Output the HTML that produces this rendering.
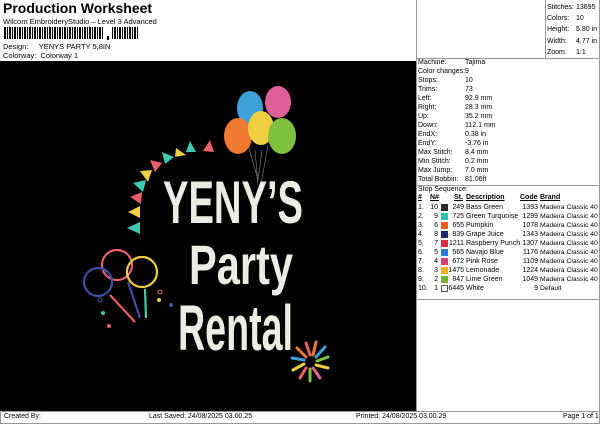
<!DOCTYPE html>
<html><head><meta charset="utf-8"><style>
*{margin:0;padding:0;box-sizing:border-box}
body{width:600px;height:424px;background:#fff;font-family:"Liberation Sans",sans-serif;color:#000;position:relative;overflow:hidden;font-size:7px}
.a{position:absolute;white-space:nowrap}
.t{font-size:7px}
.h{font-size:8px}
</style></head><body>
<div class="a" style="left:3px;top:0px;font-size:14px;font-weight:bold">Production Worksheet</div>
<div class="a h" style="left:3px;top:17px;font-size:7.5px">Wilcom EmbroideryStudio – Level 3 Advanced</div>
<svg class="a" style="left:4px;top:27px" width="135" height="14">
<rect x="0" y="0" width="100" height="12" fill="url(#bc)"/>
<defs><pattern id="bc" width="5" height="12" patternUnits="userSpaceOnUse"><rect x="0" width="2" height="12" fill="#000"/><rect x="3" width="1" height="12" fill="#000"/></pattern></defs>
<rect x="103" y="9" width="2" height="4"/>
<rect x="108" y="0" width="27" height="12" fill="url(#bc)"/>
</svg>
<div class="a h" style="left:3px;top:42px;font-size:7.5px">Design:&nbsp;&nbsp;&nbsp;&nbsp; YENYS PARTY 5,8IN</div>
<div class="a h" style="left:3px;top:51px;font-size:7.5px">Colorway:&nbsp; Colorway 1</div>

<div class="a" style="left:0;top:61px;width:416px;height:350px;background:#000"></div>
<svg class="a" style="left:0;top:61px" width="416" height="350" viewBox="0 61 416 350">
<g>
<polygon points="127,228 140,222 140,234" fill="#3fc9b0"/>
<polygon points="128,212 140,206 140,218" fill="#f0d040"/>
<polygon points="130,197 142,192 141,204" fill="#e8606a"/>
<polygon points="133,183 146,180 143,192" fill="#3fc9b0"/>
<polygon points="140,171 152,170 148,182" fill="#f0d040"/>
<polygon points="150,160 162,163 155,172" fill="#e8606a"/>
<polygon points="162,152 174,157 165,164" fill="#3fc9b0"/>
<polygon points="176,148 186,155 175,157" fill="#f0d040"/>
<polygon points="190,141 196,152 186,152" fill="#3fc9b0"/>
<polygon points="210,140 214,152 203,151" fill="#e8606a"/>
</g>
<g stroke="#888" stroke-width="0.6" fill="none">
<path d="M248 145 L258 180 M255 150 L258 185 M262 150 L258 180 M268 145 L260 190"/>
</g>
<ellipse cx="250" cy="108" rx="13" ry="17" fill="#3ea0d8"/>
<ellipse cx="278" cy="102" rx="13" ry="16" fill="#e0609a"/>
<ellipse cx="238" cy="136" rx="14" ry="18" fill="#ee7a30"/>
<ellipse cx="261" cy="128" rx="13" ry="17" fill="#f0d040"/>
<ellipse cx="282" cy="136" rx="14" ry="18" fill="#80c040"/>
<g fill="#ecece4" font-family="'Liberation Sans Narrow','Liberation Sans',sans-serif" font-weight="bold">
<text x="163" y="223" font-size="60" textLength="140" lengthAdjust="spacingAndGlyphs">YENY’S</text>
<text x="189" y="284" font-size="56" textLength="104" lengthAdjust="spacingAndGlyphs">Party</text>
<text x="178" y="350" font-size="64" textLength="115" lengthAdjust="spacingAndGlyphs">Rental</text>
</g>
<g fill="none" stroke-width="2.2">
<circle cx="117" cy="265" r="15" stroke="#e8606a"/>
<circle cx="98" cy="282" r="14" stroke="#3f4fa0"/>
<circle cx="142" cy="272" r="15" stroke="#f0d040"/>
<path d="M128 282 L140 318" stroke="#3f4fa0"/>
<path d="M145 289 L146 318" stroke="#3fc9b0"/>
<path d="M110 295 L135 322" stroke="#e8606a"/>
</g>
<g fill="#3fc9b0"><circle cx="103" cy="313" r="2"/><circle cx="160" cy="292" r="2" fill="none" stroke="#e8606a"/><circle cx="100" cy="300" r="2" fill="none" stroke="#3f4fa0"/><circle cx="159" cy="300" r="2" fill="#f0d040"/><circle cx="109" cy="326" r="2" fill="#e8606a"/><circle cx="171" cy="305" r="2" fill="#3f4fa0"/></g>
<g stroke-width="3" stroke-linecap="round">
<path d="M310 355 L306 343" stroke="#e8606a"/>
<path d="M313 355 L316 342" stroke="#ee7a30"/>
<path d="M316 357 L325 347" stroke="#3ea0d8"/>
<path d="M317 361 L328 357" stroke="#80c040"/>
<path d="M316 365 L328 368" stroke="#f0d040"/>
<path d="M313 368 L320 378" stroke="#e0609a"/>
<path d="M310 369 L310 381" stroke="#80c040"/>
<path d="M306 368 L300 378" stroke="#e8606a"/>
<path d="M304 364 L293 370" stroke="#f0d040"/>
<path d="M304 360 L292 358" stroke="#3ea0d8"/>
<path d="M306 357 L297 348" stroke="#ee7a30"/>
</g>
</svg>

<div class="a" style="left:416px;top:0;width:1px;height:411px;background:#999"></div>
<div class="a" style="left:599px;top:0;width:1px;height:424px;background:#999"></div>
<div class="a" style="left:545px;top:0;width:1px;height:58px;background:#999"></div>
<div class="a" style="left:416px;top:58px;width:184px;height:1px;background:#999"></div>
<div class="a" style="left:416px;top:185px;width:184px;height:1px;background:#999"></div>
<div class="a" style="left:416px;top:299px;width:184px;height:1px;background:#999"></div>
<div class="a t" style="left:547px;top:2px;line-height:11.2px">Stitches:<br>Colors:<br>Height:<br>Width:<br>Zoom:</div>
<div class="a t" style="left:576px;top:2px;line-height:11.2px">13695<br>10<br>5.80 in<br>4.77 in<br>1:1</div>
<div class="a t" style="left:418px;top:58px;line-height:9px">Machine:<br>Color changes:<br>Stops:<br>Trims:<br>Left:<br>Right:<br>Up:<br>Down:<br>EndX:<br>EndY:<br>Max Stitch:<br>Min Stitch:<br>Max Jump:<br>Total Bobbin:</div>
<div class="a t" style="left:465px;top:58px;line-height:9px">Tajima<br>9<br>10<br>73<br>92.9 mm<br>28.3 mm<br>35.2 mm<br>112.1 mm<br>0.38 in<br>-3.76 in<br>8.4 mm<br>0.2 mm<br>7.0 mm<br>81.06ft</div>
<div class="a t" style="left:418px;top:186px">Stop Sequence:</div>
<div class="a t" style="left:418px;top:194px;font-weight:bold;text-decoration:underline">#</div>
<div class="a t" style="left:430px;top:194px;font-weight:bold;text-decoration:underline">N#</div>
<div class="a t" style="left:454px;top:194px;font-weight:bold;text-decoration:underline">St.</div>
<div class="a t" style="left:466px;top:194px;font-weight:bold;text-decoration:underline">Description</div>
<div class="a t" style="left:520px;top:194px;font-weight:bold;text-decoration:underline">Code</div>
<div class="a t" style="left:540px;top:194px;font-weight:bold;text-decoration:underline">Brand</div>
<div class="a t" style="left:418px;top:203px;line-height:9px">1.<br>2.<br>3.<br>4.<br>5.<br>6.<br>7.<br>8.<br>9.<br>10.</div>
<div class="a t" style="left:428px;top:203px;line-height:9px;text-align:right;width:10px">10<br>9<br>6<br>8<br>7<br>5<br>4<br>3<br>2<br>1</div>
<div class="a" style="left:441px;top:204px;line-height:0">
<div style="width:7px;height:7px;background:#2a2a2a;margin-bottom:2px"></div>
<div style="width:7px;height:7px;background:#30c0b0;margin-bottom:2px"></div>
<div style="width:7px;height:7px;background:#ee6020;margin-bottom:2px"></div>
<div style="width:7px;height:7px;background:#1a2a70;margin-bottom:2px"></div>
<div style="width:7px;height:7px;background:#d83040;margin-bottom:2px"></div>
<div style="width:7px;height:7px;background:#2a80d0;margin-bottom:2px"></div>
<div style="width:7px;height:7px;background:#d04080;margin-bottom:2px"></div>
<div style="width:7px;height:7px;background:#f0b020;margin-bottom:2px"></div>
<div style="width:7px;height:7px;background:#70b030;margin-bottom:2px"></div>
<div style="width:7px;height:7px;background:#fff;border:1px solid #555"></div>
</div>
<div class="a t" style="left:446px;top:203px;line-height:9px;text-align:right;width:18px">249<br>725<br>655<br>839<br>1211<br>565<br>672<br>1475<br>847<br>6445</div>
<div class="a t" style="left:466px;top:203px;line-height:9px">Bass Green<br>Green Turquoise<br>Pumpkin<br>Grape Juice<br>Raspberry Punch<br>Navajo Blue<br>Pink Rose<br>Lemonade<br>Lime Green<br>White</div>
<div class="a t" style="left:517px;top:203px;line-height:9px;text-align:right;width:21px">1393<br>1299<br>1078<br>1343<br>1307<br>1176<br>1109<br>1224<br>1049<br>9</div>
<div class="a t" style="left:540px;top:203px;line-height:9px;font-size:6.8px">Madeira Classic 40<br>Madeira Classic 40<br>Madeira Classic 40<br>Madeira Classic 40<br>Madeira Classic 40<br>Madeira Classic 40<br>Madeira Classic 40<br>Madeira Classic 40<br>Madeira Classic 40<br>Default</div>

<div class="a" style="left:0;top:411px;width:600px;height:1px;background:#999"></div>
<div class="a" style="left:0;top:411px;width:1px;height:13px;background:#999"></div>
<div class="a" style="left:0;top:423px;width:600px;height:1px;background:#999"></div>
<div class="a" style="left:4px;top:413px;font-size:7px">Created By:</div>
<div class="a" style="left:149px;top:413px;font-size:7px">Last Saved: 24/08/2025 03.00.25</div>
<div class="a" style="left:356px;top:413px;font-size:7px">Printed: 24/08/2025 03.00.29</div>
<div class="a" style="left:563px;top:413px;font-size:7px">Page 1 of 1</div>
</body></html>
